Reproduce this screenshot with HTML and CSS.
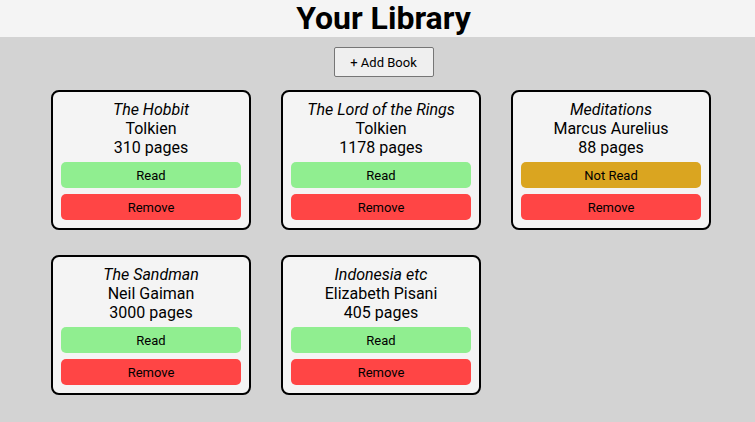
FILE: index.html
```html
<!DOCTYPE html>
<html lang="en">
<head>
<meta charset="utf-8">
<title>Your Library</title>
<link rel="stylesheet" href="styles.css">
</head>
<body>
<header class="top">
  <h1 class="title">Your Library</h1>
</header>
<main class="main">
  <div class="actions">
    <button class="add-btn">+ Add Book</button>
  </div>
  <div class="grid">
    <div class="card">
      <div class="book-title">The Hobbit</div>
      <div class="line">Tolkien</div>
      <div class="line">310 pages</div>
      <button class="btn read">Read</button>
      <button class="btn remove">Remove</button>
    </div>
    <div class="card">
      <div class="book-title">The Lord of the Rings</div>
      <div class="line">Tolkien</div>
      <div class="line">1178 pages</div>
      <button class="btn read">Read</button>
      <button class="btn remove">Remove</button>
    </div>
    <div class="card">
      <div class="book-title">Meditations</div>
      <div class="line">Marcus Aurelius</div>
      <div class="line">88 pages</div>
      <button class="btn not-read">Not Read</button>
      <button class="btn remove">Remove</button>
    </div>
    <div class="card">
      <div class="book-title">The Sandman</div>
      <div class="line">Neil Gaiman</div>
      <div class="line">3000 pages</div>
      <button class="btn read">Read</button>
      <button class="btn remove">Remove</button>
    </div>
    <div class="card">
      <div class="book-title">Indonesia etc</div>
      <div class="line">Elizabeth Pisani</div>
      <div class="line">405 pages</div>
      <button class="btn read">Read</button>
      <button class="btn remove">Remove</button>
    </div>
  </div>
</main>
</body>
</html>
```

FILE: styles.css
```css
* { box-sizing: border-box; }
html, body {
  margin: 0;
  padding: 0;
}
body {
  background: #d3d3d3;
  font-family: Roboto, "Liberation Sans", sans-serif;
  color: #000;
  min-height: 422px;
}
.top {
  background: #f4f4f4;
  height: 37px;
  display: flex;
  justify-content: center;
  align-items: center;
  padding-left: 12px;
}
.title {
  margin: 0;
  font-size: 32px;
  font-weight: 700;
  line-height: 37px;
}
.main {
  padding-top: 10px;
}
.actions {
  display: flex;
  justify-content: center;
  padding-left: 12px;
}
.add-btn {
  width: 100px;
  height: 30px;
  background: #efefef;
  border: 1px solid #767676;
  border-radius: 2px;
  font-family: Roboto, "Liberation Sans", sans-serif;
  font-size: 13px;
  color: #000;
  padding: 0;
}
.grid {
  display: grid;
  grid-template-columns: repeat(3, 200px);
  column-gap: 30px;
  row-gap: 25px;
  margin: 13px 0 0 51px;
}
.card {
  background: #f4f4f4;
  border: 2px solid #000;
  border-radius: 8px;
  padding: 8px 8px 8px;
  display: flex;
  flex-direction: column;
  align-items: center;
  height: 140px;
}
.book-title {
  font-style: italic;
  font-size: 16px;
  line-height: 19px;
}
.line {
  font-size: 16px;
  line-height: 19px;
}
.btn {
  width: 180px;
  height: 26px;
  border: none;
  border-radius: 5px;
  font-family: Roboto, "Liberation Sans", sans-serif;
  font-size: 13px;
  color: #000;
  padding: 0;
}
.read { background: #90ee90; margin-top: 5px; }
.not-read { background: #daa520; margin-top: 5px; }
.remove { background: #ff4545; margin-top: 6px; }
```
